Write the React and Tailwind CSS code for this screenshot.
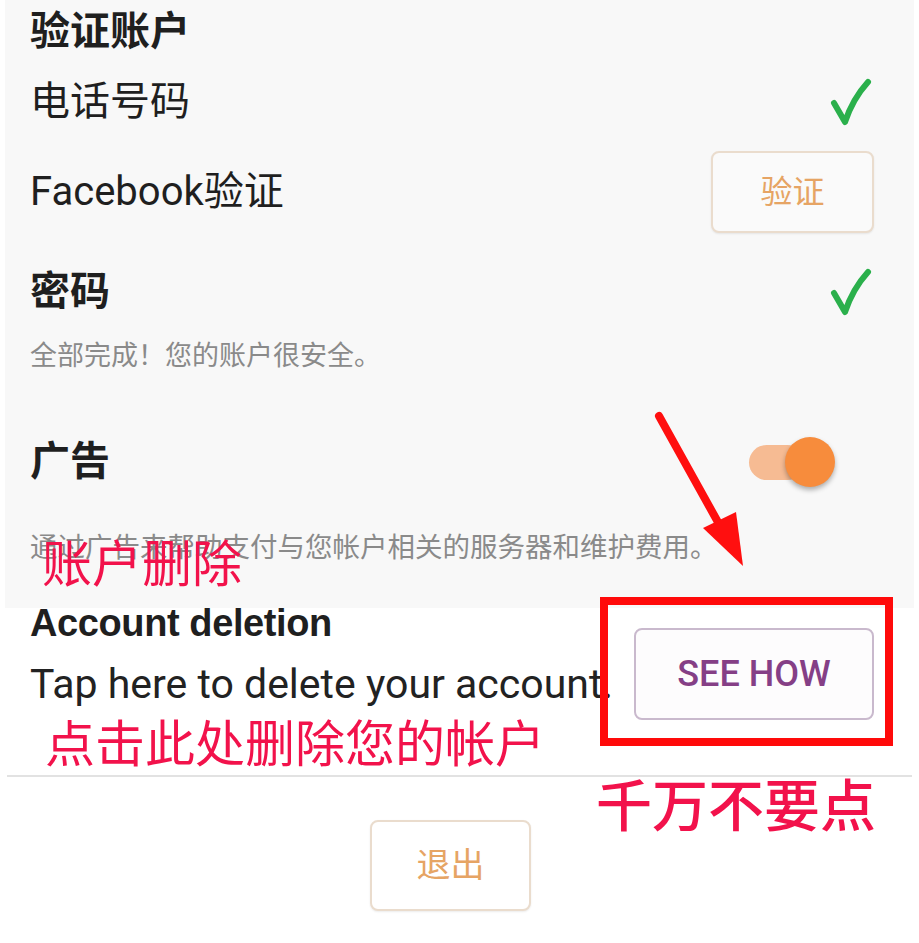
import React from "react";

const F = { fontFamily: 'Roboto, "Noto Sans CJK SC", sans-serif' };
const L = { fontFamily: '"Liberation Sans", Arial, sans-serif' };

function Check() {
  return (
    <svg width="46" height="50" viewBox="0 0 46 50" className="block">
      <path d="M6 26 L17 45 C22 30 30 16 40 5" fill="none" stroke="#2bb04c" strokeWidth="6" strokeLinecap="round" strokeLinejoin="round" />
    </svg>
  );
}

export default function App() {
  return (
    <div className="relative w-[919px] h-[943px] bg-white overflow-hidden text-[#1f1f1f]" style={F}>
      {/* gray settings panel */}
      <div className="mx-[5px] bg-[#f8f8f8] pl-[25px] pr-[40px] pb-[44px]">
        <div className="h-[64px] flex items-center text-[40px] font-bold leading-none">验证账户</div>
        <div className="h-[76px] flex items-center justify-between">
          <span className="text-[40px] leading-none">电话号码</span>
          <Check />
        </div>
        <div className="h-[104px] flex items-center justify-between">
          <span className="text-[40px] leading-none">Facebook验证</span>
          <div className="w-[163px] h-[82px] rounded-[8px] border-2 border-[#eadccd] bg-[#fafafa] flex items-center justify-center text-[32px] text-[#e6a464] shadow-[0_1px_2px_rgba(0,0,0,0.08)]">验证</div>
        </div>
        <div className="h-[96px] flex items-center justify-between">
          <span className="text-[40px] font-bold leading-none">密码</span>
          <Check />
        </div>
        <div className="h-[32px] flex items-center text-[27px] text-[#8a8a8a] leading-none">全部完成！您的账户很安全。</div>
        <div className="mt-[38px] h-[104px] flex items-center justify-between">
          <span className="text-[40px] font-bold leading-none">广告</span>
          <div className="relative w-[86px] h-[50px] mr-[39px]">
            <div className="absolute left-0 top-[8px] w-[56px] h-[35px] rounded-full bg-[#f6bb93]" />
            <div className="absolute right-0 top-0 w-[50px] h-[50px] rounded-full bg-[#f78c3c] shadow-[0_3px_5px_rgba(0,0,0,0.3)]" />
          </div>
        </div>
        <div className="mt-[18px] h-[32px] flex items-center text-[27.5px] text-[#8a8a8a] leading-none whitespace-nowrap">通过广告来帮助支付与您帐户相关的服务器和维护费用。</div>
      </div>

      {/* account deletion */}
      <div className="mx-[5px] pl-[25px] pr-[40px] flex items-start justify-between h-[167px]">
        <div className="flex flex-col">
          <div className="h-[30px] flex items-center text-[38px] font-bold tracking-[-0.4px] leading-none" style={L}>Account deletion</div>
          <div className="mt-[26px] h-[40px] flex items-center text-[41px] leading-none text-[#222] whitespace-nowrap">Tap here to delete your account.</div>
        </div>
        <div className="mt-[20px] w-[240px] h-[92px] rounded-[8px] border-2 border-[#c9b9cd] bg-[#fdfcfd] flex items-center justify-center text-[36px] font-medium text-[#853f86]">SEE HOW</div>
      </div>
      <div className="mx-[7px] h-[2px] bg-[#e2e2e2]" />

      {/* logout */}
      <div className="mt-[43px] ml-[370px] w-[161px] h-[91px] rounded-[8px] border-2 border-[#eadccd] bg-white flex items-center justify-center text-[34px] text-[#e6a464] shadow-[0_1px_2px_rgba(0,0,0,0.08)]">退出</div>

      {/* annotations */}
      <div className="absolute left-[600px] top-[597px] w-[293px] h-[149px] border-[8px] border-[#ff0a0a]" />
      <div className="absolute left-[42px] top-[540px] text-[50px] leading-none text-[#f2124b]">账户删除</div>
      <div className="absolute left-[45px] top-[720px] text-[50px] leading-none text-[#f2124b]">点击此处删除您的帐户</div>
      <div className="absolute left-[596px] top-[779px] text-[56px] font-medium leading-none text-[#f2124b]">千万不要点</div>
      <svg className="absolute left-0 top-0" width="919" height="943" viewBox="0 0 919 943">
        <line x1="659" y1="416" x2="724" y2="533" stroke="#ff0f0f" strokeWidth="8" strokeLinecap="round" />
        <polygon points="703,528 736,512 743,566" fill="#ff0f0f" />
      </svg>
    </div>
  );
}
